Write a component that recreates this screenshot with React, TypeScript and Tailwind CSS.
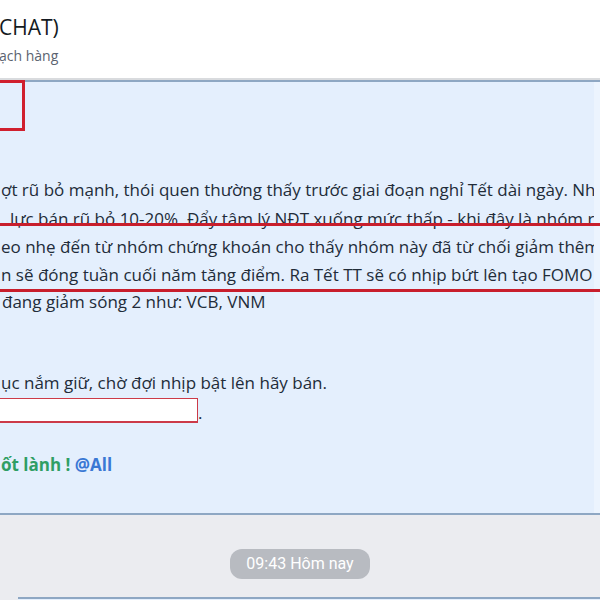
import React from "react";

export default function App() {
  const lineCls = "whitespace-nowrap";
  return (
    <div className="relative w-[600px] h-[600px] overflow-hidden bg-[#ebecf0] font-['Open_Sans','Noto_Sans',sans-serif]">
      <div className="h-[80px] bg-white border-b-2 border-[#d9dbde] pt-[13px]">
        <div className="text-[21px] leading-[28px] font-medium text-[#141a22] -ml-[1px]">CHAT)</div>
        <div className="text-[14px] leading-[20px] text-[#5b6370] mt-[5px] -ml-[1px]">ạch hàng</div>
      </div>
      <div className="relative h-[435px] w-full overflow-hidden bg-[#e4effd] border-t-2 border-b-2 border-[#8ea7c3]">
        <div className="absolute right-0 top-0 bottom-0 w-[6px] bg-[#ecf4fe]"></div>
        <div className="pt-[93px] text-[17px] text-[#222c39]">
          <div className={lineCls + " h-[29px] leading-[29px] pl-[1px]"}>ợt rũ bỏ mạnh, thói quen thường thấy trước giai đoạn nghỉ Tết dài ngày. Nh</div>
          <div className={lineCls + " h-[29px] leading-[29px] pl-[10px]"}>lực bán rũ bỏ 10-20%. Đẩy tâm lý NĐT xuống mức thấp - khi đây là nhóm r</div>
          <div className={lineCls + " h-[28px] leading-[28px] pl-[1px]"}>eo nhẹ đến từ nhóm chứng khoán cho thấy nhóm này đã từ chối giảm thêm</div>
          <div className={lineCls + " h-[27px] leading-[27px] pl-[1px]"}>n sẽ đóng tuần cuối năm tăng điểm. Ra Tết TT sẽ có nhịp bứt lên tạo FOMO</div>
          <div className={lineCls + " h-[27px] leading-[27px] pl-[2px]"}>đang giảm sóng 2 như: VCB, VNM</div>
          <div className="h-[27px]"></div>
          <div className="h-[27px]"></div>
          <div className={lineCls + " h-[27.5px] leading-[27.5px] pl-[1px]"}>ục nắm giữ, chờ đợi nhịp bật lên hãy bán.</div>
          <div className={lineCls + " h-[27.5px] flex items-center"}>
            <div className="w-[200px] h-[25px] -ml-[2px] bg-[#cc3a48] p-[1.5px]">
              <div className="w-full h-full bg-white"></div>
            </div>
            <span className="leading-none mt-[4px]">.</span>
          </div>
          <div className="h-[27px]"></div>
          <div className={lineCls + " h-[27px] leading-[27px] pl-[1px] font-bold"}>
            <span className="text-[#2f9e64]">ốt lành !</span>{" "}
            <span className="text-[#3a78d4]">@All</span>
          </div>
        </div>
      </div>
      <div className="h-[82px] flex justify-center pt-[34px]">
        <div className="h-[30px] px-[16px] rounded-[12px] bg-[#b8bbc1] text-white text-[16px] leading-[30px] font-['Roboto',sans-serif]">
          09:43 Hôm nay
        </div>
      </div>
      <div className="ml-[18px] h-[10px] bg-[#e4effd] border-t-2 border-[#8ea7c3]"></div>

      <div className="absolute left-[-10px] top-[80px] w-[35px] h-[51px] border-[3px] border-[#d01f2e]"></div>
      <div className="absolute left-[-10px] top-[223px] w-[620px] h-[69px] border-[3px] border-[#c81e2c]"></div>
    </div>
  );
}
